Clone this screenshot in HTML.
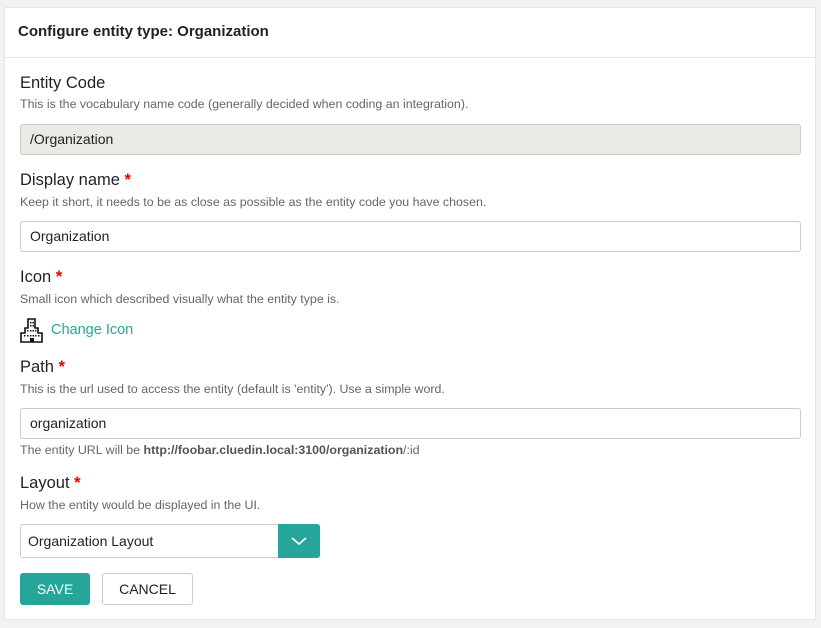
<!DOCTYPE html>
<html><head><meta charset="utf-8"><style>
body{margin:0;width:821px;height:628px;background:#f2f2f2;font-family:"Liberation Sans",sans-serif;position:relative;overflow:hidden}
.panel{position:absolute;left:4px;top:7px;width:812px;height:613px;background:#fff;border:1px solid #e6e6e6;box-sizing:border-box}
.hdr{position:absolute;left:0;top:0;right:0;height:49px;border-bottom:1px solid #e6e6e6}
.a{position:absolute;white-space:nowrap}
.t{left:13px;top:15px;font-size:15px;font-weight:bold;color:#222}
.l{font-size:16.5px;color:#222;left:15px}
.l b{color:#e00;font-weight:bold}
.d{font-size:12.4px;color:#666;left:15px}
.in{position:absolute;left:15px;width:781px;height:31px;border:1px solid #ccc;border-radius:3px;box-sizing:border-box;font-size:14px;color:#222;padding:0 9px;line-height:29px}
</style></head><body>
<div class="panel">
<div class="hdr"><div class="a t">Configure entity type: Organization</div></div>
<div class="a l" style="top:66px">Entity Code</div>
<div class="a d" style="top:89px">This is the vocabulary name code (generally decided when coding an integration).</div>
<div class="in" style="top:116px;background:#eae9e3">/Organization</div>
<div class="a l" style="top:163px">Display name <b>*</b></div>
<div class="a d" style="top:187px">Keep it short, it needs to be as close as possible as the entity code you have chosen.</div>
<div class="in" style="top:213px">Organization</div>
<div class="a l" style="top:260px">Icon <b>*</b></div>
<div class="a d" style="top:284px">Small icon which described visually what the entity type is.</div>
<svg class="a" style="left:15px;top:309px" width="24" height="26" viewBox="0 0 24 26" fill="none" stroke="#111" stroke-width="1.6">
<path d="M1 25V16H5V11H8V2H15V11H18V16H22V25Z"/>
<g fill="#111" stroke="none"><rect x="10" y="5" width="1.5" height="1.5"/><rect x="12.5" y="5" width="1.5" height="1.5"/><rect x="10" y="8" width="1.5" height="1.5"/><rect x="12.5" y="8" width="1.5" height="1.5"/><rect x="7" y="13" width="1.5" height="1.5"/><rect x="10" y="13" width="1.5" height="1.5"/><rect x="12.5" y="13" width="1.5" height="1.5"/><rect x="15" y="13" width="1.5" height="1.5"/><rect x="4" y="18" width="1.5" height="1.5"/><rect x="7" y="18" width="1.5" height="1.5"/><rect x="10" y="18" width="1.5" height="1.5"/><rect x="12.5" y="18" width="1.5" height="1.5"/><rect x="15" y="18" width="1.5" height="1.5"/><rect x="18" y="18" width="1.5" height="1.5"/></g>
<rect x="10" y="21" width="4" height="4" fill="#111" stroke="none"/>
</svg>
<div class="a" style="left:46px;top:314px;font-size:14.5px;color:#26a69a">Change Icon</div>
<div class="a l" style="top:350px">Path <b>*</b></div>
<div class="a d" style="top:374px">This is the url used to access the entity (default is 'entity'). Use a simple word.</div>
<div class="in" style="top:400px">organization</div>
<div class="a d" style="top:435px">The entity URL will be <b style="color:#555">http://foobar.cluedin.local:3100/organization</b>/:id</div>
<div class="a l" style="top:466px">Layout <b>*</b></div>
<div class="a d" style="top:490px">How the entity would be displayed in the UI.</div>
<div class="in" style="top:516px;width:300px;height:34px;line-height:32px;padding-left:7px">Organization Layout</div>
<div class="a" style="left:273px;top:516px;width:42px;height:34px;background:#26a69a;border-radius:0 3px 3px 0">
<svg width="42" height="34"><path d="M14 14L21 20L28 14" stroke="#fff" stroke-width="1.8" fill="none"/></svg></div>
<div class="a" style="left:15px;top:565px;width:70px;height:32px;background:#26a69a;border-radius:3px;color:#fff;font-size:14px;text-align:center;line-height:32px">SAVE</div>
<div class="a" style="left:97px;top:565px;width:91px;height:32px;border:1px solid #ccc;box-sizing:border-box;border-radius:3px;color:#222;font-size:14px;text-align:center;line-height:30px">CANCEL</div>
</div>
</body></html>
